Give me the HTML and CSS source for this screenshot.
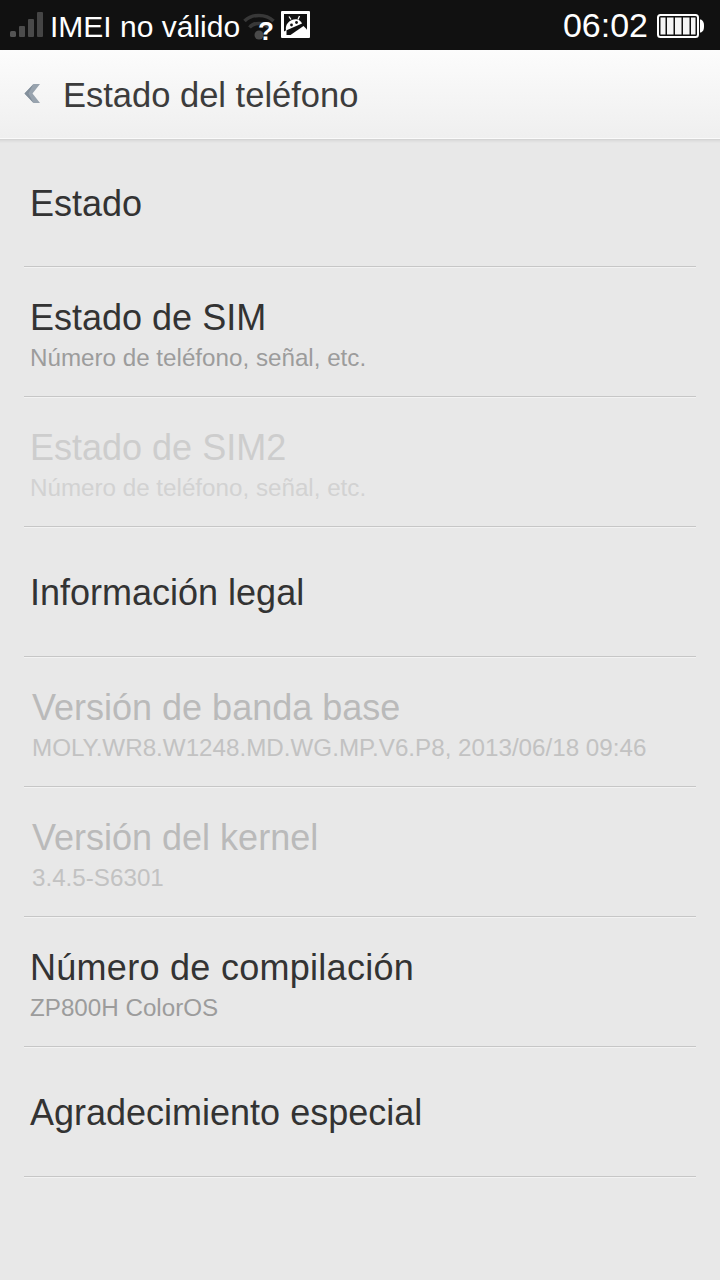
FILE: index.html
```html
<!DOCTYPE html>
<html lang="es">
<head>
<meta charset="utf-8">
<title>Estado del teléfono</title>
<link rel="stylesheet" href="styles.css">
</head>
<body>
<div class="statusbar">
  <svg class="signal" width="34" height="28" viewBox="0 0 34 28"><rect x="0" y="19" width="6" height="6" rx="1.500" fill="#555"/><rect x="9" y="14" width="6" height="11" rx="1" fill="#4c4c4c"/><rect x="18" y="7" width="6" height="18" rx="1" fill="#4a4a4a"/><rect x="27" y="0" width="6" height="25" rx="1" fill="#454545"/></svg>
  <span class="imei">IMEI no válido</span>
  <span class="wifi-wrap">
    <svg class="wifi" width="32" height="30" viewBox="0 0 32 30"><path d="M1.500 9C9 1.500 23 1.500 30.500 9" fill="none" stroke="#383838" stroke-width="3.500"/><path d="M6.500 15.500C11 10 21 10 25.500 15.500" fill="none" stroke="#383838" stroke-width="3.500"/><circle cx="16" cy="23" r="4.500" fill="#4a4a4a"/></svg>
    <span class="wifi-q">?</span>
  </span>
  <svg class="notif" width="29" height="28" viewBox="0 0 29 28"><rect width="29" height="27" rx="1" fill="#fff"/><rect x="3" y="3" width="23" height="21" fill="#111"/><path d="M5 19.500C3.500 13 10 7 16.500 8.500C18.500 9 20 10.500 21 12.500Z" fill="#fff"/><path d="M10 8.500L8 5.500M17 8.500L18.500 5" stroke="#fff" stroke-width="1.300" fill="none"/><circle cx="10.500" cy="14" r="1.400" fill="#111"/><circle cx="15.500" cy="11.500" r="1.400" fill="#111"/><path d="M9.500 24L22.500 15L26 18.500V24Z" fill="#fff"/><path d="M3 20.500L5.500 19V24H3Z" fill="#fff"/></svg>
  <span class="spacer"></span>
  <span class="clock">06:02</span>
  <svg class="battery" width="47" height="24" viewBox="0 0 47 24"><rect x="1" y="1" width="40" height="22" rx="2.500" fill="none" stroke="#fff" stroke-width="2"/><rect x="3.500" y="3.500" width="5" height="17" fill="#f4f4f4"/><rect x="10" y="3.500" width="6.500" height="17" fill="#f4f4f4"/><rect x="18" y="3.500" width="6.500" height="17" fill="#f4f4f4"/><rect x="26" y="3.500" width="6.500" height="17" fill="#f4f4f4"/><rect x="34" y="3.500" width="4.500" height="17" fill="#f4f4f4"/><path d="M43 5.500H44Q47 7 47 11V13Q47 17 44 18.500H43Z" fill="#fff"/></svg>
</div>
<header class="titlebar">
  <svg class="back" width="18" height="21" viewBox="0 0 18 21"><path d="M17 1L9.500 10.500L17 20H10.500L1.500 10.500L10.500 1Z" fill="#98a3ae"/><path d="M10.500 1L1.500 10.500L10.500 20L5.500 10.500Z" fill="#838f9b"/></svg>
  <h1 class="title">Estado del teléfono</h1>
</header>
<main class="list">
  <div class="row single first"><span class="label">Estado</span></div>
  <div class="row"><span class="label">Estado de SIM</span><span class="sub">Número de teléfono, señal, etc.</span></div>
  <div class="row off"><span class="label">Estado de SIM2</span><span class="sub">Número de teléfono, señal, etc.</span></div>
  <div class="row single"><span class="label">Información legal</span></div>
  <div class="row info"><span class="label">Versión de banda base</span><span class="sub">MOLY.WR8.W1248.MD.WG.MP.V6.P8, 2013/06/18 09:46</span></div>
  <div class="row info"><span class="label">Versión del kernel</span><span class="sub">3.4.5-S6301</span></div>
  <div class="row"><span class="label wide">Número de compilación</span><span class="sub">ZP800H ColorOS</span></div>
  <div class="row single"><span class="label">Agradecimiento especial</span></div>
</main>
</body>
</html>
```
FILE: styles.css
```css
* { box-sizing: border-box; }
html, body { margin: 0; padding: 0; }
body {
  width: 720px;
  height: 1280px;
  overflow: hidden;
  background: #e8e8e8;
  font-family: "Liberation Sans", Arial, sans-serif;
}
.statusbar {
  height: 50px;
  background: #111;
  display: flex;
  align-items: center;
  padding: 0 16px 0 10px;
  color: #fff;
}
.signal { flex: none; margin-right: 6px; margin-top: 1px; }
.imei { font-size: 30px; white-space: nowrap; margin-top: 4px; }
.wifi-wrap { position: relative; flex: none; width: 32px; height: 30px; margin-left: 3px; margin-top: 4px; }
.wifi { display: block; }
.wifi-q {
  position: absolute;
  left: 15px;
  top: 5px;
  font-size: 26px;
  line-height: 28px;
  font-weight: 700;
}
.notif { flex: none; margin-left: 6px; }
.spacer { flex: 1; }
.clock { font-size: 34px; white-space: nowrap; margin-right: 9px; }
.battery { flex: none; margin-top: 2px; }
.titlebar {
  height: 89px;
  display: flex;
  align-items: center;
  padding: 0 0 0 23px;
  background: linear-gradient(#fcfcfc, #efefef);
  border-bottom: 1px solid #fafafa;
  box-shadow: 0 1px 0 #d4d4d4, 0 2px 0 #dcdcdc, 0 3px 0 #e1e1e1, 0 4px 0 #e5e5e5;
}
.back { flex: none; margin-right: 22px; margin-bottom: 2px; }
.title { margin: 0; font-size: 34.5px; font-weight: 400; color: #3c3c3c; margin-top: 3px; }
.list { padding: 1px 24px 0; }
.row {
  height: 130px;
  border-bottom: 1px solid #c6c6c6;
  box-shadow: 0 1px 0 #f2f2f2;
  display: flex;
  flex-direction: column;
  padding: 31px 6px 0;
}
.row.single { padding-top: 46px; }
.row.first { height: 127px; padding-top: 44px; }
.label { font-size: 36px; color: #333; line-height: 40px; }
.label.wide { letter-spacing: 0.28px; }
.sub { font-size: 24.2px; color: #9c9c9c; line-height: 28px; margin-top: 6px; white-space: nowrap; }
.row.off .label { color: #cdcdcd; }
.row.off .sub { color: #d2d2d2; }
.row.info { padding-left: 8px; }
.row.info .label { color: #bababa; }
.row.info .sub { color: #c2c2c2; }
```
